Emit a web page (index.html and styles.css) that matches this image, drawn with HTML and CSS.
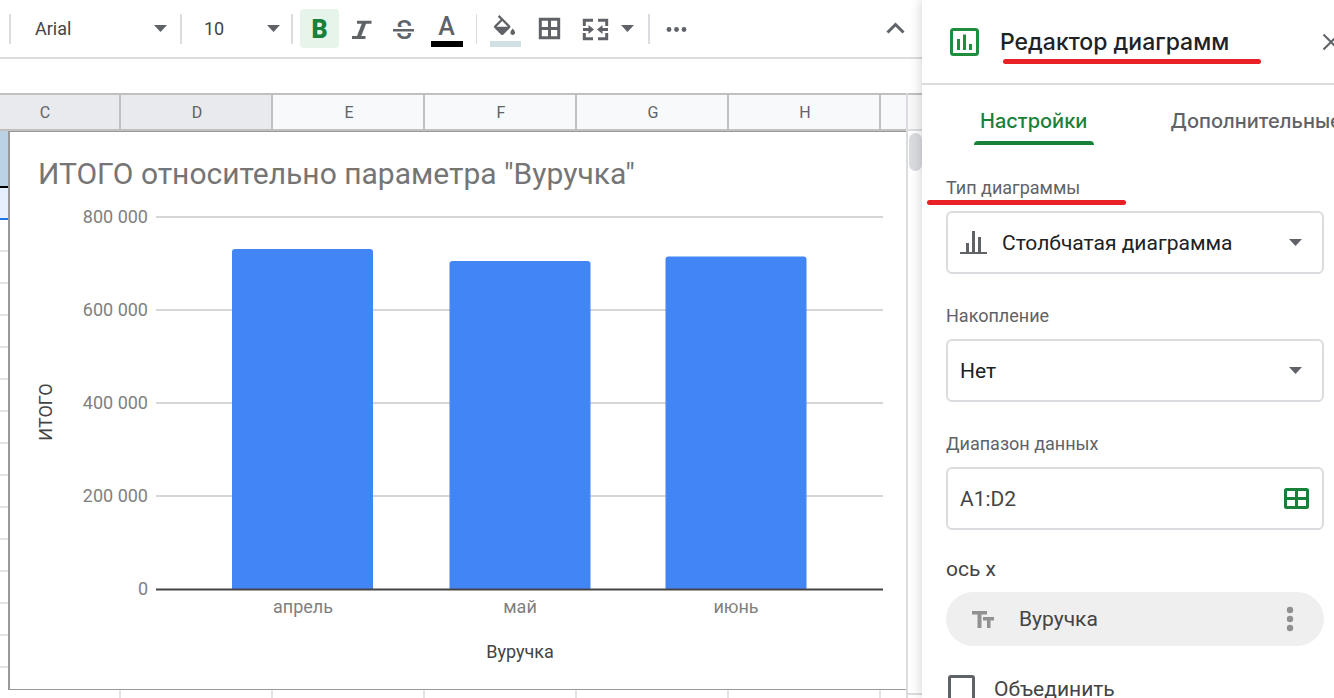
FILE: index.html
```html
<!DOCTYPE html>
<html lang="ru">
<head>
<meta charset="utf-8">
<title>Редактор диаграмм</title>
<link rel="stylesheet" href="styles.css">
</head>
<body>
<main class="workspace">
  <div class="toolbar" role="toolbar" aria-label="Форматирование">
    <span class="sep"></span>
    <div class="picker picker-font">
      <select aria-label="Шрифт"><option>Arial</option></select>
      <svg class="arrow" width="13" height="7" viewBox="0 0 13 7"><path d="M0 0h13L6.500 7z"/></svg>
    </div>
    <span class="sep"></span>
    <div class="picker picker-size">
      <select aria-label="Размер шрифта"><option>10</option></select>
      <svg class="arrow" width="13" height="7" viewBox="0 0 13 7"><path d="M0 0h13L6.500 7z"/></svg>
    </div>
    <span class="sep"></span>
    <div class="group group-text">
      <button class="tool tool-on" aria-label="Полужирный"><span class="bold">B</span></button>
      <button class="tool" aria-label="Курсив"><svg viewBox="0 0 39 39"><path class="line" d="M15 13.200h14.500M10 28.500h13.500"/><path class="line stem" d="M22.600 13L16.800 28"/></svg></button>
      <button class="tool" aria-label="Зачёркнутый"><svg viewBox="0 0 39 39"><text x="20" y="30" class="strike">S</text><path d="M9 18h21v6H9z" fill="#fff"/><path d="M9 20h21v2.500H9z"/></svg></button>
      <button class="tool" aria-label="Цвет текста"><svg viewBox="0 0 39 39"><text x="20.500" y="26" class="letter">A</text><path d="M5 32h32v6H5z" fill="#000"/></svg></button>
    </div>
    <span class="sep sep-thin"></span>
    <div class="group group-cell">
      <button class="tool" aria-label="Цвет заливки"><svg viewBox="0 0 39 39"><path transform="translate(4.500 6) scale(1.170)" d="M16.560 8.940L7.620 0 6.210 1.410l2.380 2.380-5.150 5.150c-.59.59-.59 1.540 0 2.120l5.500 5.500c.29.29.68.44 1.060.44s.77-.15 1.060-.44l5.500-5.500c.59-.58.59-1.530 0-2.120zM5.210 10L10 5.210 14.790 10H5.210zM19 11.500s-2 2.170-2 3.500c0 1.100.9 2 2 2s2-.9 2-2c0-1.330-2-3.500-2-3.500z"/><path d="M4 32h31v6H4z" fill="#d0e0e3"/></svg></button>
      <button class="tool" aria-label="Границы"><svg viewBox="0 0 39 39"><path class="line" d="M10.300 10.300h18.400v18.400H10.300zM19.500 10v19M10 19.500h19"/></svg></button>
      <button class="tool" aria-label="Объединить ячейки"><svg viewBox="0 0 39 39"><path class="line" d="M19 11.300h-8.700V17M24 11.300h8.700V17M19 29.700h-8.700V24M24 29.700h8.700V24M9 20.500h7M34 20.500h-7"/><path d="M14.500 16l5.500 4.500-5.500 4.500zM28.500 16L23 20.500l5.500 4.500z"/></svg></button>
    </div>
    <button class="tool tool-more" aria-label="Типы объединения"><svg class="arrow" width="13" height="7" viewBox="0 0 13 7"><path d="M0 0h13L6.500 7z"/></svg></button>
    <span class="sep"></span>
    <button class="tool tool-dots" aria-label="Ещё"><svg viewBox="0 0 39 39"><circle cx="12" cy="20.500" r="2.400"/><circle cx="19.500" cy="20.500" r="2.400"/><circle cx="27" cy="20.500" r="2.400"/></svg></button>
    <button class="tool tool-hide" aria-label="Скрыть меню"><svg viewBox="0 0 39 39"><path class="line chevron" d="M11.500 23.500l8-8 8 8"/></svg></button>
  </div>
  <div class="formula"></div>

  <div class="sheet">
    <div class="grid">
      <table class="cells">
        <thead><tr><th class="picked">C</th><th class="picked">D</th><th>E</th><th>F</th><th>G</th><th>H</th><th></th></tr></thead>
        <tbody>
          <tr class="row-head"><td></td><td></td><td></td><td></td><td></td><td></td><td></td></tr>
          <tr class="row-data"><td></td><td></td><td></td><td></td><td></td><td></td><td></td></tr>
          <tr><td></td><td></td><td></td><td></td><td></td><td></td><td></td></tr>
          <tr><td></td><td></td><td></td><td></td><td></td><td></td><td></td></tr>
          <tr><td></td><td></td><td></td><td></td><td></td><td></td><td></td></tr>
          <tr><td></td><td></td><td></td><td></td><td></td><td></td><td></td></tr>
          <tr><td></td><td></td><td></td><td></td><td></td><td></td><td></td></tr>
          <tr><td></td><td></td><td></td><td></td><td></td><td></td><td></td></tr>
          <tr><td></td><td></td><td></td><td></td><td></td><td></td><td></td></tr>
          <tr><td></td><td></td><td></td><td></td><td></td><td></td><td></td></tr>
          <tr><td></td><td></td><td></td><td></td><td></td><td></td><td></td></tr>
          <tr><td></td><td></td><td></td><td></td><td></td><td></td><td></td></tr>
          <tr><td></td><td></td><td></td><td></td><td></td><td></td><td></td></tr>
          <tr><td></td><td></td><td></td><td></td><td></td><td></td><td></td></tr>
          <tr><td></td><td></td><td></td><td></td><td></td><td></td><td></td></tr>
          <tr><td></td><td></td><td></td><td></td><td></td><td></td><td></td></tr>
          <tr><td></td><td></td><td></td><td></td><td></td><td></td><td></td></tr>
        </tbody>
      </table>
      <figure class="chart">
        <svg width="896" height="557" viewBox="10 132 896 557" role="img" aria-label="Столбчатая диаграмма">
          <text class="chart-title" x="38" y="184">ИТОГО относительно параметра "Вуручка"</text>
          <path class="rule" d="M156 217h727M156 310h727M156 403h727M156 496h727"/>
          <g class="tick tick-y">
            <text x="148" y="223">800 000</text>
            <text x="148" y="316">600 000</text>
            <text x="148" y="409">400 000</text>
            <text x="148" y="502">200 000</text>
            <text x="148" y="595">0</text>
          </g>
          <g class="bars">
            <path d="M232 589V252q0-3 3-3h135q3 0 3 3V589z"/>
            <path d="M449.500 589V264q0-3 3-3h135q3 0 3 3V589z"/>
            <path d="M665.500 589V259.500q0-3 3-3h135q3 0 3 3V589z"/>
          </g>
          <path class="base" d="M156 589.500h727"/>
          <g class="tick tick-x">
            <text x="303" y="613">апрель</text>
            <text x="520" y="613">май</text>
            <text x="736" y="613">июнь</text>
          </g>
          <text class="axis-title" x="520" y="658">Вуручка</text>
          <text class="axis-title" transform="translate(52 412) rotate(-90)">ИТОГО</text>
        </svg>
      </figure>
    </div>
    <div class="scroll">
      <div class="scroll-head"></div>
      <div class="scroll-track"><div class="scroll-thumb"></div></div>
      <div class="scroll-foot"></div>
    </div>
  </div>
</main>

<aside class="panel">
  <header class="panel-head">
    <svg class="panel-icon" width="29" height="28" viewBox="0 0 29 28"><rect x="1.500" y="1.500" width="26" height="25" rx="2" fill="none" stroke="#1e8e3e" stroke-width="3"/><path d="M7 11h3v11H7zM13 6.500h3V22h-3zM19 16h3v6h-3z"/></svg>
    <h1 class="panel-title marked">Редактор диаграмм</h1>
    <button class="close" aria-label="Закрыть"><svg width="18" height="18" viewBox="0 0 18 18"><path d="M1.500 1.500l15 15M16.500 1.500l-15 15"/></svg></button>
  </header>
  <nav class="tabs">
    <a class="tab tab-on" href="#setup">Настройки</a>
    <a class="tab" href="#custom">Дополнительные</a>
  </nav>
  <form class="form" id="setup">
    <label class="label marked-label" for="type">Тип диаграммы</label>
    <div class="field">
      <svg class="type-icon" width="27" height="23" viewBox="0 0 27 23"><path d="M0 21h27v2H0zM6 12h3v10H6zM12 0h3v22h-3zM18 6h3v16h-3z"/></svg>
      <select id="type"><option>Столбчатая диаграмма</option></select>
      <svg class="arrow" width="13" height="7" viewBox="0 0 13 7"><path d="M0 0h13L6.500 7z"/></svg>
    </div>
    <label class="label" for="stack">Накопление</label>
    <div class="field">
      <select id="stack"><option>Нет</option></select>
      <svg class="arrow" width="13" height="7" viewBox="0 0 13 7"><path d="M0 0h13L6.500 7z"/></svg>
    </div>
    <label class="label" for="range">Диапазон данных</label>
    <div class="field field-range">
      <input id="range" type="text" value="A1:D2">
      <button class="pick" type="button" aria-label="Выбрать диапазон"><svg width="25" height="21" viewBox="0 0 25 21"><rect x="1.500" y="1.500" width="22" height="18" rx="1"/><path d="M12.500 1v19M1 10.500h23"/></svg></button>
    </div>
    <h2 class="axis">ось x</h2>
    <div class="chip">
      <svg class="chip-icon" width="22" height="17" viewBox="0 0 22 17"><path d="M0 0h15v3.500H9.500V17h-4V3.500H0zM11 6h11v3.500h-3.500V17H15V9.500h-4z"/></svg>
      <span class="chip-text">Вуручка</span>
      <button class="kebab" type="button" aria-label="Действия"><svg width="8" height="26" viewBox="0 0 8 26"><circle cx="4" cy="4" r="3.200"/><circle cx="4" cy="13" r="3.200"/><circle cx="4" cy="22" r="3.200"/></svg></button>
    </div>
    <label class="check"><input type="checkbox"><span>Объединить</span></label>
  </form>
</aside>
</body>
</html>
```
FILE: styles.css
```css
* { box-sizing: border-box; }
body {
  margin: 0;
  height: 100vh;
  display: flex;
  overflow: hidden;
  background: #fff;
  color: #444;
  font-family: Roboto, "Liberation Sans", sans-serif;
  font-size: 18px;
}
button, select, input { font: inherit; color: inherit; }
button { border: 0; padding: 0; background: none; cursor: pointer; }
select {
  appearance: none;
  border: 0;
  padding: 0;
  background: none;
  flex: 1;
  min-width: 0;
}
svg { display: block; fill: #5f6368; flex: none; }
.arrow { pointer-events: none; }

.workspace {
  flex: 1;
  min-width: 0;
  display: flex;
  flex-direction: column;
  overflow: hidden;
}

/* toolbar */
.toolbar {
  height: 59px;
  flex: none;
  display: flex;
  align-items: center;
  padding-left: 9px;
  border-bottom: 2px solid #dadce0;
}
.sep { width: 2px; height: 30px; background: #dadce0; flex: none; }
.sep-thin { width: 1px; margin-left: 11px; }
.picker { display: flex; align-items: center; height: 39px; flex: none; }
.picker-font { width: 169px; padding: 0 13px 0 24px; }
.picker-size { width: 109px; padding: 0 11px 0 22px; }
.group { display: flex; flex: none; }
.group-text { gap: 3px; margin-left: 7px; }
.group-cell { gap: 5px; margin-left: 9px; }
.tool {
  width: 39px;
  height: 39px;
  flex: none;
  display: flex;
  align-items: center;
  justify-content: center;
  border-radius: 4px;
}
.tool-on { background: #e6f4ea; color: #188038; }
.bold { font-size: 25px; font-weight: 900; line-height: 39px; padding-top: 2px; }
.line { fill: none; stroke: #5f6368; stroke-width: 3; }
.stem { stroke-width: 4; }
.letter { font-size: 25px; font-weight: 500; text-anchor: middle; }
.strike { font-size: 26px; font-weight: 500; text-anchor: middle; }
.tool-more { width: 28px; margin-right: 7px; }
.tool-dots { margin-left: 7px; }
.tool-hide { margin-left: auto; margin-right: 7px; }
.formula { height: 34px; flex: none; }

/* sheet */
.sheet { flex: 1; min-height: 0; display: flex; }
.grid {
  position: relative;
  flex: 1;
  min-width: 0;
  overflow: hidden;
  border-right: 2px solid #dadce0;
}
.cells {
  width: 1064px;
  margin-left: -31px;
  table-layout: fixed;
  border-collapse: separate;
  border-spacing: 0;
}
.cells th {
  height: 38px;
  padding: 0 0 0 2px;
  background: #f8f9fb;
  border: solid #c0c0c0;
  border-width: 2px 2px 2px 0;
  color: #5f6368;
  font-size: 16px;
  font-weight: 400;
}
.cells .picked { background: #e8eaed; }
.cells td {
  height: 32px;
  padding: 0;
  border: solid #e2e3e3;
  border-width: 0 2px 2px 0;
}
.row-head td { height: 57px; background: #bbd2e4; border-bottom-color: #000; }
.row-data td { background: #e6effd; border-bottom-color: #1a73e8; }

.scroll { width: 14px; flex: none; display: flex; flex-direction: column; }
.scroll-head {
  height: 38px;
  flex: none;
  background: #f8f8f8;
  border-top: 2px solid #c0c0c0;
  border-bottom: 2px solid #dadce0;
}
.scroll-track { flex: 1; padding: 2px 0 0 1px; }
.scroll-thumb { height: 38px; border-radius: 7px; background: #dadce0; }
.scroll-foot { height: 5px; flex: none; border-top: 2px solid #dadce0; }

/* floating chart */
.chart {
  position: absolute;
  left: 8px;
  top: 38px;
  margin: 0;
  background: #fff;
  border: solid #999;
  border-width: 1px 0 1px 2px;
}
.chart-title { font-size: 30px; fill: #757575; }
.rule { stroke: #d6d6d6; stroke-width: 2; }
.base { stroke: #444; stroke-width: 2; }
.bars { fill: #4285f4; }
.tick { fill: #808080; }
.tick-y { text-anchor: end; }
.tick-x { text-anchor: middle; }
.axis-title { fill: #444; text-anchor: middle; }

/* chart editor */
.panel {
  position: relative;
  width: 412px;
  flex: none;
  background: #fff;
  box-shadow: 0 0 12px rgba(0, 0, 0, 0.2);
}
.panel-head {
  height: 85px;
  display: flex;
  align-items: center;
  padding-left: 28px;
  border-bottom: 2px solid #dadce0;
}
.panel-icon { fill: #1e8e3e; }
.panel-title {
  position: relative;
  margin: 0 0 0 21px;
  color: #202124;
  font-family: Inter, Roboto, sans-serif;
  font-size: 23px;
  line-height: 32px;
  font-weight: 500;
}
.marked::after, .marked-label::after {
  content: "";
  position: absolute;
  height: 5px;
  border-radius: 3px;
  background: #e82127;
}
.marked::after { left: 3px; top: 33px; width: 258px; }
.marked-label::after { left: -19px; top: 24px; width: 199px; }
.close { margin-left: auto; margin-right: -6px; }
.close path { fill: none; stroke: #5f6368; stroke-width: 2; }
.tabs { display: flex; gap: 70px; padding-left: 52px; }
.tab {
  flex: none;
  height: 60px;
  padding: 22px 7px 0 6px;
  border-bottom: 4px solid transparent;
  color: #5f6368;
  font-family: Inter, Roboto, sans-serif;
  font-size: 20px;
  line-height: 28px;
  font-weight: 500;
  text-decoration: none;
}
.tab-on { position: relative; color: #188038; }
.tab-on::after {
  content: "";
  position: absolute;
  left: 0;
  right: 0;
  bottom: -4px;
  height: 4px;
  border-radius: 4px 4px 0 0;
  background: #188038;
}
.form { padding: 31px 10px 0 24px; }
.label {
  position: relative;
  display: block;
  width: fit-content;
  margin-bottom: 11px;
  color: #5f6368;
  line-height: 24px;
}
.field {
  height: 63px;
  display: flex;
  align-items: center;
  margin-bottom: 30px;
  padding: 0 20px 0 12px;
  border: 2px solid #dadce0;
  border-radius: 6px;
  color: #202124;
  font-size: 21px;
}
.type-icon { margin-right: 15px; }
.field-range { padding-right: 13px; margin-bottom: 27px; color: #444; }
.field input {
  flex: 1;
  min-width: 0;
  border: 0;
  padding: 0;
  background: none;
}
.pick svg { fill: none; stroke: #188038; stroke-width: 3; }
.axis {
  margin: 0 0 11px;
  font-size: 21px;
  font-weight: 400;
  line-height: 24px;
}
.chip {
  height: 54px;
  display: flex;
  align-items: center;
  padding: 0 30px 0 26px;
  border-radius: 27px;
  background: #efefef;
  font-size: 21px;
}
.chip svg { fill: #919191; }
.chip-text { flex: 1; margin-left: 25px; }
.check {
  display: flex;
  align-items: center;
  gap: 19px;
  margin: 29px 0 0 2px;
  font-size: 21px;
}
.check input {
  appearance: none;
  width: 27px;
  height: 27px;
  margin: 0;
  border: 3px solid #5f6368;
  border-radius: 3px;
}
```
